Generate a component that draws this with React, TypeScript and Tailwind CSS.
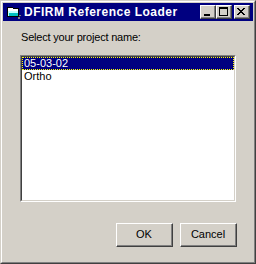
// Classic Windows 2000 style dialog: "DFIRM Reference Loader"

const font = "font-['Liberation_Sans',Arial,sans-serif]";

function CaptionButton({ children }: { children: React.ReactNode }) {
  return (
    <div className="w-4 h-[14px] bg-[#d4d0c8] border border-t-white border-l-white border-r-[#404040] border-b-[#404040]">
      <div className="w-full h-full border-r border-b border-[#808080] flex items-center justify-center">
        {children}
      </div>
    </div>
  );
}

function PushButton({ label }: { label: string }) {
  return (
    <div className="w-[57px] h-[24px] bg-[#d4d0c8] border border-t-white border-l-white border-r-[#404040] border-b-[#404040]">
      <div className="w-full h-full border-r border-b border-[#808080] flex items-center justify-center text-[11px] text-black">
        {label}
      </div>
    </div>
  );
}

function AppIcon() {
  return (
    <svg width="16" height="16" viewBox="0 0 16 16" shapeRendering="crispEdges">
      <path d="M1 3h5l1 1h6v9H1z" fill="#000" />
      <path d="M2 4h4l1 1h5v2H2z" fill="#ffffff" />
      <path d="M2 7h10v5H2z" fill="#c0ffff" />
      <path d="M3 9h9v3H3z" fill="#00c0c0" />
      <path d="M13 11h2v1h-2zM12 13h2v2h-2z" fill="#808080" />
    </svg>
  );
}

export default function App() {
  const items = ["05-03-02", "Ortho"];
  const selected = 0;

  return (
    <div className={`w-[256px] h-[264px] ${font} bg-[#d4d0c8] border border-t-[#d4d0c8] border-l-[#d4d0c8] border-r-[#404040] border-b-[#404040]`}>
      <div className="w-full h-full border border-t-white border-l-white border-r-[#808080] border-b-[#808080] p-px flex flex-col">
        {/* Title bar */}
        <div className="h-[18px] bg-[#000080] flex items-center">
          <div className="ml-[3px] w-4 h-4">
            <AppIcon />
          </div>
          <span className="ml-[2px] text-white font-bold text-[12px] tracking-[0.5px] leading-none">DFIRM Reference Loader</span>
          <div className="ml-auto mr-[3px] flex items-center">
            <CaptionButton>
              <div className="w-[6px] h-[2px] bg-black mt-[6px] -ml-[1px]" />
            </CaptionButton>
            <CaptionButton>
              <div className="w-[9px] h-[9px] border border-black border-t-2 -ml-[1px]" />
            </CaptionButton>
            <div className="w-[2px]" />
            <CaptionButton>
              <svg width="8" height="7" viewBox="0 0 8 7" shapeRendering="crispEdges" className="-ml-[1px]">
                <path d="M0 0h2v1h1v1h2V1h1V0h2v1H7v1H6v1H5v1h1v1h1v1h1v1H6V6H5V5H3v1H2v1H0V6h1V5h1V4h1V3H2V2H1V1H0z" fill="#000" />
              </svg>
            </CaptionButton>
          </div>
        </div>

        {/* Client area */}
        <div className="flex-1 flex flex-col">
          <div className="mt-[10px] ml-[18px] text-[11px] leading-[13px] tracking-[-0.2px] text-black">Select your project name:</div>

          <div className="mt-[11px] ml-[17px] w-[216px] h-[147px] border border-t-[#808080] border-l-[#808080] border-r-white border-b-white">
            <div className="w-full h-full border border-t-[#404040] border-l-[#404040] border-r-[#d4d0c8] border-b-[#d4d0c8] bg-white">
              {items.map((item, i) => (
                <div
                  key={item}
                  className={`h-[13px] pl-[1px] text-[11px] leading-[11px] ${
                    i === selected
                      ? "bg-[#000080] text-white border border-dotted border-[#ffff00]"
                      : "text-black pl-[2px] pt-px"
                  }`}
                >
                  {item}
                </div>
              ))}
            </div>
          </div>

          <div className="mt-[21px] mr-[16px] flex justify-end gap-[7px]">
            <PushButton label="OK" />
            <PushButton label="Cancel" />
          </div>
        </div>
      </div>
    </div>
  );
}
